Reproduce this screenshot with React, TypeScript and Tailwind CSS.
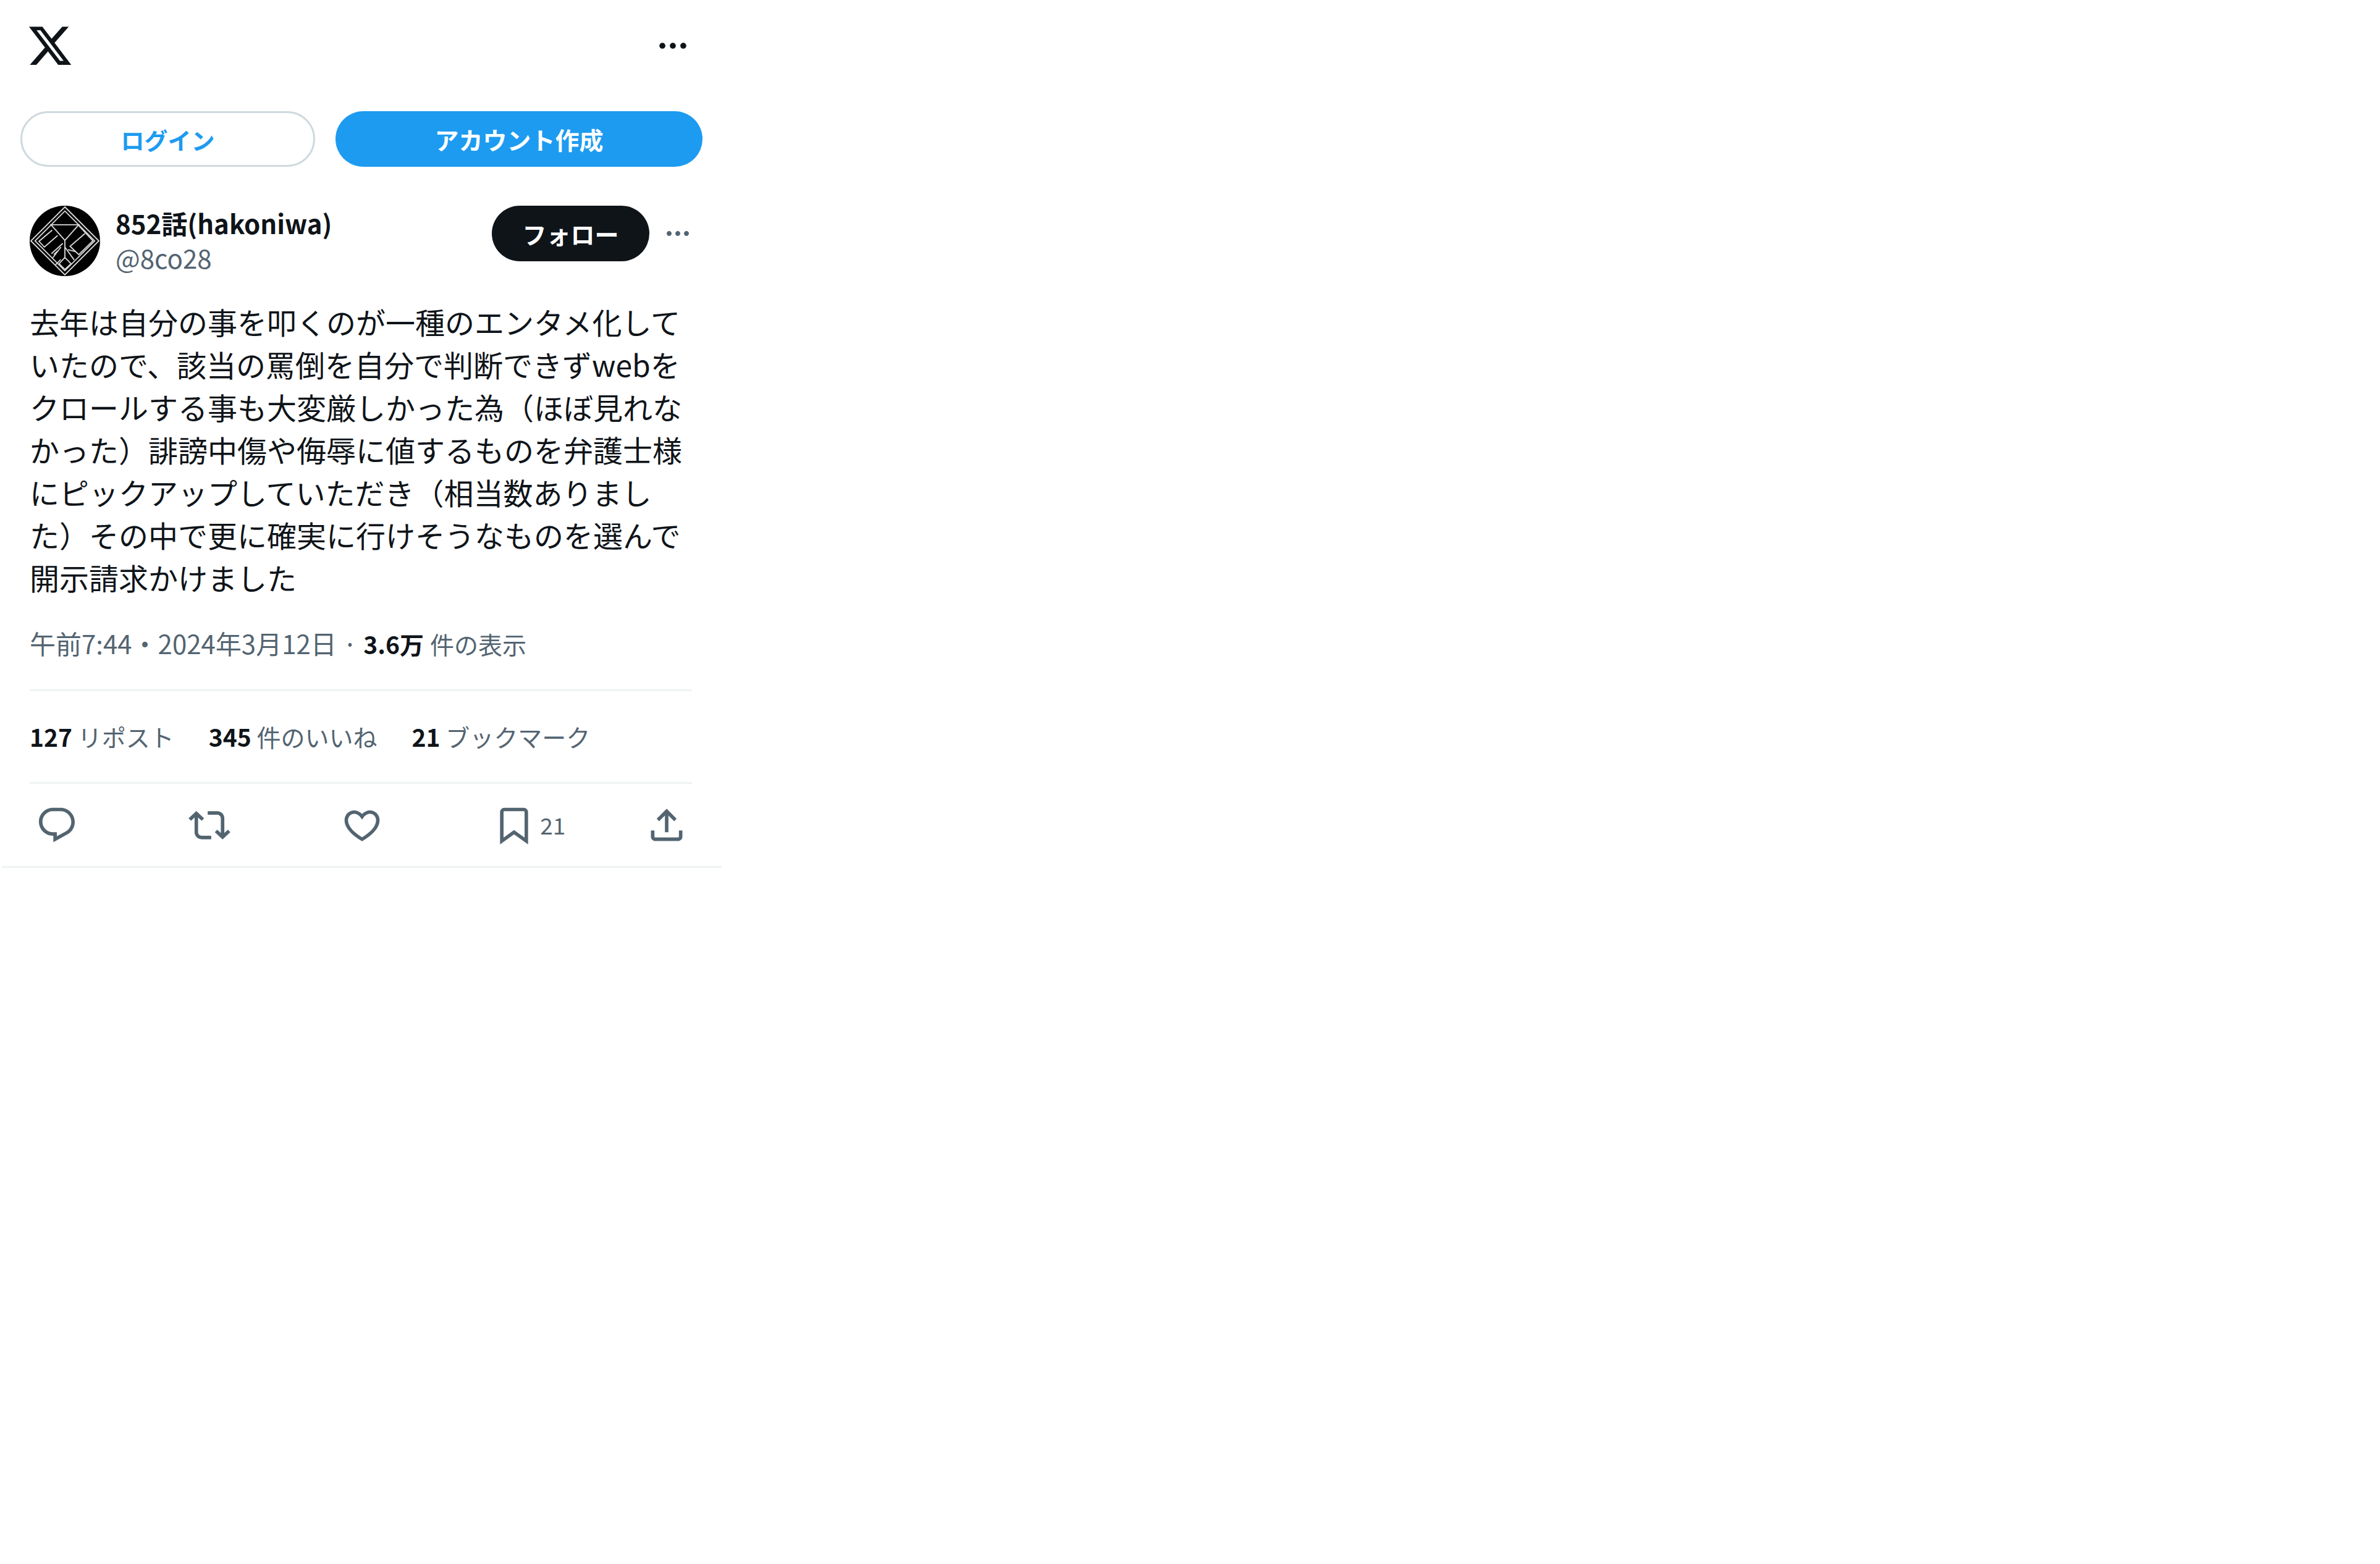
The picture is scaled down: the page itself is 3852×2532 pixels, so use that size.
function Dots({ c, s }: { c: string; s: number }) {
  return (
    <svg viewBox="0 0 24 24" width={s} height={s} fill={c}>
      <path d="M3 12c0-1.1.9-2 2-2s2 .9 2 2-.9 2-2 2-2-.9-2-2zm9 2c1.1 0 2-.9 2-2s-.9-2-2-2-2 .9-2 2 .9 2 2 2zm7 0c1.1 0 2-.9 2-2s-.9-2-2-2-2 .9-2 2 .9 2 2 2z" />
    </svg>
  );
}
function Ico({ d, s = 68 }: { d: string; s?: number }) {
  return (
    <svg viewBox="0 0 24 24" width={s} height={s} fill="#536471" className="shrink-0">
      <path d={d} />
    </svg>
  );
}
const reply = "M1.751 10c0-4.42 3.584-8 8.005-8h4.366c4.49 0 8.129 3.64 8.129 8.13 0 2.96-1.607 5.68-4.196 7.11l-8.054 4.46v-3.69h-.067c-4.49.1-8.183-3.51-8.183-8.01zm8.005-6c-3.317 0-6.005 2.69-6.005 6 0 3.37 2.77 6.08 6.138 6.01l.351-.01h1.761v2.3l5.087-2.81c1.951-1.08 3.163-3.13 3.163-5.36 0-3.39-2.744-6.13-6.129-6.13H9.756z";
const rt = "M4.5 3.88l4.432 4.14-1.364 1.46L5.5 7.55V16c0 1.1.896 2 2 2H13v2H7.5c-2.209 0-4-1.79-4-4V7.55L1.432 9.48.068 8.02 4.5 3.88zM16.5 6H11V4h5.5c2.209 0 4 1.79 4 4v8.45l2.068-1.93 1.364 1.46-4.432 4.14-4.432-4.14 1.364-1.46 2.068 1.93V8c0-1.1-.896-2-2-2z";
const heart = "M16.697 5.5c-1.222-.06-2.679.51-3.89 2.16l-.805 1.09-.806-1.09C9.984 6.01 8.526 5.44 7.304 5.5c-1.243.07-2.349.78-2.91 1.91-.552 1.12-.633 2.78.479 4.82 1.074 1.97 3.257 4.27 7.129 6.61 3.87-2.34 6.052-4.64 7.126-6.61 1.111-2.04 1.03-3.7.477-4.82-.561-1.13-1.666-1.84-2.908-1.91zm4.187 7.69c-1.351 2.48-4.001 5.12-8.379 7.67l-.503.3-.504-.3c-4.379-2.55-7.029-5.19-8.382-7.67-1.36-2.5-1.41-4.86-.514-6.67.887-1.79 2.647-2.91 4.601-3.01 1.651-.09 3.368.56 4.798 2.01 1.429-1.45 3.146-2.1 4.796-2.01 1.954.1 3.714 1.22 4.601 3.01.896 1.81.846 4.17-.514 6.67z";
const bookmark = "M4 4.5C4 3.12 5.119 2 6.5 2h11C18.881 2 20 3.12 20 4.5v18.44l-8-5.71-8 5.71V4.5zM6.5 4c-.276 0-.5.22-.5.5v14.56l6-4.29 6 4.29V4.5c0-.28-.224-.5-.5-.5h-11z";
const share = "M12 2.59l5.7 5.7-1.41 1.42L13 6.41V16h-2V6.41l-3.3 3.3-1.41-1.42L12 2.59zM21 15l-.02 3.51c0 1.38-1.12 2.49-2.5 2.49H5.5C4.11 21 3 19.88 3 18.5V15h2v3.5c0 .28.22.5.5.5h12.98c.28 0 .5-.22.5-.49L19 15h2z";

function Avatar() {
  return (
    <svg viewBox="55 40 340 340" width={114} height={114} className="shrink-0">
      <circle cx="225" cy="210" r="170" fill="#000" />
      <g fill="none" stroke="#d8d8d8" strokeWidth="5.5">
        <path d="M225 46 L389 210 L225 374 L61 210 Z" />
        <path d="M225 66 L369 210 L225 354 L81 210 Z" />
        <path d="M158 132 H292 L225 207 Z" />
        <path d="M164 158 L100 212 L126 240 L190 184" />
        <path d="M292 136 L360 210 L292 276 L250 236 L322 174" />
        <path d="M215 222 L160 272 M206 240 L166 292 M190 258 L172 276" />
        <path d="M225 207 V296 M225 240 L270 302 M240 252 L276 262" />
        <path d="M225 290 L255 320 L225 348 L197 320 Z" />
        <path d="M205 300 L180 325" />
      </g>
    </svg>
  );
}

export default function App() {
  return (
    <div className="w-[1165px] ml-[3px] text-[#0f1419] font-['Noto_Sans_CJK_JP','Noto_Sans',sans-serif]">
      <header className="h-[148px] flex items-center justify-between pl-[40px] pr-[50px]">
        <svg viewBox="0 0 24 24" width={76} height={76} fill="#0f1419">
          <path d="M18.244 2.25h3.308l-7.227 8.26 8.502 11.24H16.17l-5.214-6.817L4.99 21.75H1.68l7.73-8.835L1.254 2.25H8.08l4.713 6.231zm-1.161 17.52h1.833L7.084 4.126H5.117z" />
        </svg>
        <Dots c="#0f1419" s={58} />
      </header>
      <div className="flex gap-[33px] pl-[30px] mt-[32px]">
        <div className="w-[477px] h-[90px] rounded-full border-[3px] border-[#cfd9de] flex items-center justify-center text-[#1d9bf0] text-[38px] font-bold">ログイン</div>
        <div className="w-[594px] h-[90px] rounded-full bg-[#1d9bf0] flex items-center justify-center text-white text-[39px] font-bold">アカウント作成</div>
      </div>
      <main className="mt-[63px] pl-[45px] pr-[48px]">
        <div className="flex items-start">
          <Avatar />
          <div className="ml-[25px] flex-1 flex flex-col">
            <div className="text-[42px] leading-[56px] font-bold">852話(hakoniwa)</div>
            <div className="text-[42px] leading-[56px] text-[#536471]">@8co28</div>
          </div>
          <div className="w-[255px] h-[90px] rounded-full bg-[#0f1419] text-white flex items-center justify-center text-[39px] font-bold">フォロー</div>
          <div className="ml-[22px] mt-[21px] mr-[-1px]"><Dots c="#536471" s={48} /></div>
        </div>
        <p className="mt-[39px] text-[48px] leading-[69px] text-[#0f1419]">
          去年は自分の事を叩くのが一種のエンタメ化していたので、該当の罵倒を自分で判断できずwebをクロールする事も大変厳しかった為（ほぼ見れなかった）誹謗中傷や侮辱に値するものを弁護士様にピックアップしていただき（相当数ありました）その中で更に確実に行けそうなものを選んで開示請求かけました
        </p>
        <div className="mt-[43px] text-[42px] leading-[58px] text-[#536471] flex items-baseline">
          <span>午前7:44・2024年3月12日</span>
          <span className="mx-[10px]">·</span>
          <span className="text-[39px] font-bold text-[#0f1419]">3.6万</span>
          <span className="text-[39px] ml-[10px]">件の表示</span>
        </div>
        <div className="mt-[45px] border-t-[3px] border-[#eff3f4] h-[150px] flex items-center gap-[56px] text-[39px] text-[#536471]">
          <span><b className="text-[#0f1419]">127</b> リポスト</span>
          <span><b className="text-[#0f1419]">345</b> 件のいいね</span>
          <span><b className="text-[#0f1419]">21</b> ブックマーク</span>
        </div>
        <div className="border-t-[3px] border-[#eff3f4] h-[136px] flex items-center justify-between pl-[10px] pr-[7px]">
          <Ico d={reply} />
          <Ico d={rt} />
          <Ico d={heart} />
          <div className="w-[68px] flex items-center gap-[8px] text-[37px] text-[#536471]"><Ico d={bookmark} /><span>21</span></div>
          <Ico d={share} />
        </div>
      </main>
      <div className="border-t-[3px] border-[#eff3f4]" />
    </div>
  );
}
